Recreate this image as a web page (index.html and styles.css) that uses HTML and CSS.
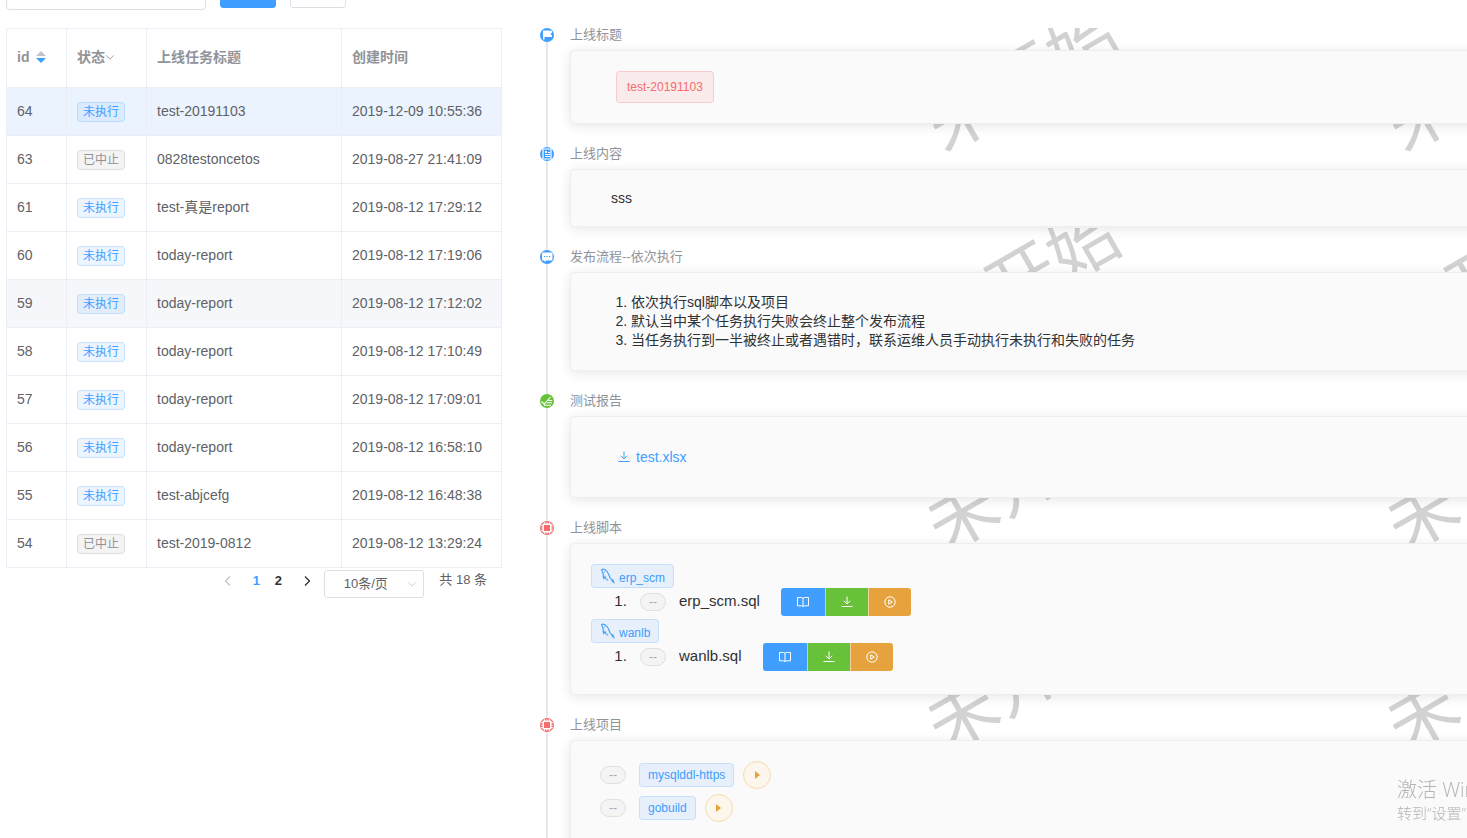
FILE: index.html
```
<!DOCTYPE html>
<html lang="zh-CN">
<head>
<meta charset="utf-8">
<title>上线任务</title>
<link rel="stylesheet" href="styles.css">
</head>
<body>
<svg class="defs" aria-hidden="true">
  <symbol id="i-download" viewBox="0 0 12 12"><path d="M6 .5v7.2M2.8 4.8L6 8l3.2-3.2M.5 10.500h11" fill="none" stroke="currentColor"/></symbol>
  <symbol id="i-read" viewBox="0 0 12 12"><path d="M6 2v8.500M.5 1.500H4.500L6 2.200 7.500 1.500h4v8.300h-4L6 10.500 4.500 9.800h-4z" fill="none" stroke="currentColor"/></symbol>
  <symbol id="i-play" viewBox="0 0 12 12"><circle cx="6" cy="6" r="5.200" fill="none" stroke="currentColor"/><path d="M4.700 3.800v4.400L8.300 6z" fill="none" stroke="currentColor"/></symbol>
  <symbol id="i-mysql" viewBox="0 0 16 16"><path d="M1.500 1.500C3.500.8 5.500 1.600 7 3.500c1.700 2.200 2.200 4.500 3 6.200.8 1.500 2.200 2.300 3.800 2.800l-1.800.3 2.500 2.200M1.500 1.500c.2 1.500 1.300 2.300 1.600 3.800.3 1.800-.2 3.500.7 5.200l1.100-1.800c.6 2 1.700 3.200 3.300 3.800" fill="none" stroke="currentColor" stroke-width="1.200"/><circle cx="4.800" cy="3.800" r=".6" fill="currentColor"/></symbol>
  <symbol id="i-left" viewBox="0 0 12 12"><path d="M8 1.500L3.500 6 8 10.500" fill="none" stroke="currentColor" stroke-width="1.300"/></symbol>
  <symbol id="i-right" viewBox="0 0 12 12"><path d="M4 1.500L8.500 6 4 10.500" fill="none" stroke="currentColor" stroke-width="1.300"/></symbol>
  <symbol id="i-down" viewBox="0 0 12 12"><path d="M1.500 4L6 8.500 10.500 4" fill="none" stroke="currentColor"/></symbol>
  <symbol id="i-chip" viewBox="0 0 14 14"><circle cx="7" cy="7" r="7" fill="#f56c6c"/><path d="M4.500 1.200v11.600M7 1.200v11.600M9.500 1.200v11.600M1.200 4.500h11.600M1.200 7h11.600M1.200 9.500h11.600" stroke="#fff" stroke-width=".9"/><rect x="2.500" y="2.500" width="9" height="9" rx="1" fill="#fff"/><rect x="4" y="4" width="6" height="6" fill="#f56c6c"/></symbol>
</svg>
<main class="page">
  <section class="tasks">
    <form class="search">
      <input class="search-input" type="text" aria-label="搜索">
      <button class="search-btn search-btn-primary" type="button" aria-label="搜索"></button>
      <button class="search-btn" type="button" aria-label="重置"></button>
    </form>
    <table class="table">
      <colgroup><col class="col-id"><col class="col-status"><col class="col-title"><col class="col-time"></colgroup>
      <thead>
        <tr>
          <th><span class="th-sort">id <svg class="sort" viewBox="0 0 10 12"><path d="M0 5L5 0l5 5z" fill="#c0c4cc"/><path d="M0 7l5 5 5-5z" fill="#409eff"/></svg></span></th>
          <th><span class="th-filter">状态<svg class="icon-filter"><use href="#i-down"/></svg></span></th>
          <th>上线任务标题</th><th>创建时间</th>
        </tr>
      </thead>
      <tbody>
        <tr class="current"><td>64</td><td><span class="tag tag-mini">未执行</span></td><td>test-20191103</td><td>2019-12-09 10:55:36</td></tr>
        <tr><td>63</td><td><span class="tag tag-mini tag-info">已中止</span></td><td>0828testoncetos</td><td>2019-08-27 21:41:09</td></tr>
        <tr><td>61</td><td><span class="tag tag-mini">未执行</span></td><td>test-真是report</td><td>2019-08-12 17:29:12</td></tr>
        <tr><td>60</td><td><span class="tag tag-mini">未执行</span></td><td>today-report</td><td>2019-08-12 17:19:06</td></tr>
        <tr class="hover"><td>59</td><td><span class="tag tag-mini">未执行</span></td><td>today-report</td><td>2019-08-12 17:12:02</td></tr>
        <tr><td>58</td><td><span class="tag tag-mini">未执行</span></td><td>today-report</td><td>2019-08-12 17:10:49</td></tr>
        <tr><td>57</td><td><span class="tag tag-mini">未执行</span></td><td>today-report</td><td>2019-08-12 17:09:01</td></tr>
        <tr><td>56</td><td><span class="tag tag-mini">未执行</span></td><td>today-report</td><td>2019-08-12 16:58:10</td></tr>
        <tr><td>55</td><td><span class="tag tag-mini">未执行</span></td><td>test-abjcefg</td><td>2019-08-12 16:48:38</td></tr>
        <tr><td>54</td><td><span class="tag tag-mini tag-info">已中止</span></td><td>test-2019-0812</td><td>2019-08-12 13:29:24</td></tr>
      </tbody>
    </table>
    <nav class="pagination" aria-label="分页">
      <button class="pager-arrow" type="button" disabled aria-label="上一页"><svg class="icon"><use href="#i-left"/></svg></button>
      <button class="pager active" type="button">1</button>
      <button class="pager" type="button">2</button>
      <button class="pager-arrow pager-next" type="button" aria-label="下一页"><svg class="icon"><use href="#i-right"/></svg></button>
      <div class="page-size">
        <select class="page-size-select" aria-label="每页条数"><option>10条/页</option></select>
        <svg class="icon-select"><use href="#i-down"/></svg>
      </div>
      <span class="total">共 18 条</span>
    </nav>
  </section>

  <section class="detail">
    <div class="watermark" aria-hidden="true">
      <div class="mark"><span>未开始</span></div><div class="mark"><span>未开始</span></div>
      <div class="mark"><span>未开始</span></div><div class="mark"><span>未开始</span></div>
      <div class="mark"><span>未开始</span></div><div class="mark"><span>未开始</span></div>
      <div class="mark"><span>未开始</span></div><div class="mark"><span>未开始</span></div>
    </div>
    <ul class="timeline">
      <li class="item">
        <svg class="node" viewBox="0 0 14 14"><circle cx="7" cy="7" r="7" fill="#409eff"/><path d="M3 2.500h6.500l1 .5 1.500-.5v2l-1.500 1.500L12 7.500V9H4.500v2.500H3z" fill="#fff"/></svg>
        <div class="title">上线标题</div>
        <div class="card"><div class="tag-box"><span class="tag tag-large tag-danger">test-20191103</span></div></div>
      </li>
      <li class="item">
        <svg class="node" viewBox="0 0 14 14"><circle cx="7" cy="7" r="7" fill="#409eff"/><path d="M3 2h8v10H3z" fill="none" stroke="#fff" stroke-width="1.200"/><path d="M5 4h2v2H5z" fill="#fff"/><path d="M8 5.500h2M5 7.500h5M5 9.500h5" fill="none" stroke="#fff"/></svg>
        <div class="title">上线内容</div>
        <div class="card"><p class="content">sss</p></div>
      </li>
      <li class="item">
        <svg class="node" viewBox="0 0 14 14"><circle cx="7" cy="7" r="7" fill="#409eff"/><path d="M3 2.500h8.500q1 0 1 1v6q0 1-1 1H6.500L4.500 12v-1.500H3q-1 0-1-1v-6q0-1 1-1z" fill="#fff"/><path d="M4 6h1.200v1H4zM6.500 6h1.200v1H6.500zM9 6h1.200v1H9z" fill="#409eff"/></svg>
        <div class="title">发布流程--依次执行</div>
        <div class="card">
          <ol class="flow"><li>依次执行sql脚本以及项目</li><li>默认当中某个任务执行失败会终止整个发布流程</li><li>当任务执行到一半被终止或者遇错时，联系运维人员手动执行未执行和失败的任务</li></ol>
        </div>
      </li>
      <li class="item">
        <svg class="node" viewBox="0 0 14 14"><circle cx="7" cy="7" r="7" fill="#67c23a"/><path d="M1.500 7.500l2.700 2.700L10.500 3M8.500 6.500h3.700M7 8.800h5M4 11.200h7" fill="none" stroke="#fff" stroke-width="1.100"/></svg>
        <div class="title">测试报告</div>
        <div class="card"><a class="file" href="#"><svg class="icon"><use href="#i-download"/></svg>test.xlsx</a></div>
      </li>
      <li class="item">
        <svg class="node"><use href="#i-chip"/></svg>
        <div class="title">上线脚本</div>
        <div class="card">
          <div class="script">
            <span class="tag tag-small tag-db"><svg class="icon-db"><use href="#i-mysql"/></svg>erp_scm</span>
            <ol class="script-list"><li><div class="script-row"><span class="state">--</span><span class="script-name">erp_scm.sql</span>
              <div class="group"><button class="btn btn-primary" type="button" aria-label="查看"><svg class="icon"><use href="#i-read"/></svg></button><button class="btn btn-success" type="button" aria-label="下载"><svg class="icon"><use href="#i-download"/></svg></button><button class="btn btn-warning" type="button" aria-label="执行"><svg class="icon"><use href="#i-play"/></svg></button></div></div></li></ol>
          </div>
          <div class="script">
            <span class="tag tag-small tag-db"><svg class="icon-db"><use href="#i-mysql"/></svg>wanlb</span>
            <ol class="script-list"><li><div class="script-row"><span class="state">--</span><span class="script-name">wanlb.sql</span>
              <div class="group"><button class="btn btn-primary" type="button" aria-label="查看"><svg class="icon"><use href="#i-read"/></svg></button><button class="btn btn-success" type="button" aria-label="下载"><svg class="icon"><use href="#i-download"/></svg></button><button class="btn btn-warning" type="button" aria-label="执行"><svg class="icon"><use href="#i-play"/></svg></button></div></div></li></ol>
          </div>
        </div>
      </li>
      <li class="item">
        <svg class="node"><use href="#i-chip"/></svg>
        <div class="title">上线项目</div>
        <div class="card card-projects">
          <div class="project"><span class="state">--</span><span class="tag tag-small">mysqlddl-https</span><button class="run" type="button" aria-label="执行 mysqlddl-https"><svg class="icon-run" viewBox="0 0 5 8"><path d="M0 0l5 4-5 4z" fill="currentColor"/></svg></button></div>
          <div class="project"><span class="state">--</span><span class="tag tag-small">gobuild</span><button class="run" type="button" aria-label="执行 gobuild"><svg class="icon-run" viewBox="0 0 5 8"><path d="M0 0l5 4-5 4z" fill="currentColor"/></svg></button></div>
        </div>
      </li>
    </ul>
  </section>
</main>
<aside class="activate"><p class="activate-title">激活 Windows</p><p class="activate-text">转到“设置”以激活 Windows。</p></aside>
</body>
</html>
```
FILE: styles.css
```
* { box-sizing: border-box; }
html { height: 100%; overflow: hidden; }
body {
  height: 100%;
  margin: 0;
  overflow: hidden;
  background: #fff;
  color: #303133;
  font: 14px/20px "Liberation Sans", "Noto Sans CJK SC", sans-serif;
}
button, input, select { font: inherit; margin: 0; }
p, ul, ol { margin: 0; padding: 0; }
.defs { display: none; }
svg { display: block; flex: none; }
.icon { width: 12px; height: 12px; }

.page { display: flex; align-items: flex-start; padding-left: 6px; }

/* Task list */
.tasks { flex: none; width: 496px; }
.search { display: flex; gap: 14px; height: 28px; margin-top: -18px; margin-bottom: 18px; }
.search-input { width: 200px; border: 1px solid #dcdfe6; border-radius: 4px; }
.search-btn { width: 56px; height: 26px; border: 1px solid #dcdfe6; border-radius: 3px; background: #fff; }
.search-btn-primary { background: #409eff; border-color: #409eff; }

.table {
  width: 100%;
  table-layout: fixed;
  border-spacing: 0;
  border-top: 1px solid #ebeef5;
  border-left: 1px solid #ebeef5;
  color: #606266;
}
.col-id { width: 60px; }
.col-status { width: 80px; }
.col-time { width: 160px; }
.table th, .table td {
  height: 48px;
  padding: 0 10px 2px;
  border-right: 1px solid #ebeef5;
  border-bottom: 1px solid #ebeef5;
  text-align: left;
  white-space: nowrap;
}
.table td:nth-child(2) { padding-bottom: 0; }
.table th { height: 59px; color: #909399; }
.current { background: #ebf3ff; }
.hover { background: #f5f7fa; }
.th-sort, .th-filter { display: flex; align-items: center; }
.th-sort { gap: 7px; }
.sort { width: 10px; height: 12px; }
.icon-filter { width: 10px; height: 10px; }

.tag {
  display: inline-flex;
  align-items: center;
  border: 1px solid rgba(64, 158, 255, .2);
  border-radius: 4px;
  background: rgba(64, 158, 255, .1);
  color: #409eff;
  font-size: 12px;
  white-space: nowrap;
}
.tag-mini { height: 20px; padding: 0 5px; vertical-align: middle; line-height: 18px; }
.tag-small { height: 24px; padding: 0 8px; }
.tag-large { height: 32px; padding: 0 10px; }
.tag-info { background: #f4f4f5; border-color: #dedfe1; color: #909399; }
.tag-danger { background: rgba(245, 108, 108, .1); border-color: rgba(245, 108, 108, .25); color: #f56c6c; }

.pagination { display: flex; align-items: flex-start; padding: 2px 15px 0 0; justify-content: flex-end; font-size: 13px; color: #606266; }
.pager, .pager-arrow { display: flex; align-items: center; justify-content: center; width: 22px; height: 22px; padding: 0; border: 0; background: none; color: #303133; font-weight: bold; }
.pager-arrow { width: 35px; }
.pager-arrow:disabled { color: #c0c4cc; }
.pager.active { color: #409eff; }
.page-size { position: relative; width: 100px; margin-right: 15px; }
.page-size-select { width: 100%; height: 28px; padding: 0 17px 0 0; border: 1px solid #dcdfe6; border-radius: 3px; background: #fff; color: #606266; text-align: center; text-align-last: center; appearance: none; }
.icon-select { position: absolute; right: 7px; top: 9px; width: 10px; height: 10px; color: #c0c4cc; pointer-events: none; }

/* Detail timeline */
.detail { position: relative; flex: 1; min-width: 0; margin: 28px -20px 0 38px; }
.watermark {
  position: absolute;
  top: 0;
  left: 360px;
  display: grid;
  grid-template-columns: 460px 460px;
  grid-auto-rows: 200px;
  color: #d2d2d2;
  font-size: 70px;
  line-height: 80px;
}
.mark { overflow: hidden; padding: 12px 0 0 18px; }
.mark span { display: block; width: 210px; white-space: nowrap; transform: rotate(-30deg); }

.timeline { position: relative; list-style: none; }
.item { position: relative; padding: 0 0 23px 30px; }
.item::before { content: ""; position: absolute; left: 6px; top: 0; bottom: 0; width: 2px; background: #e4e7ed; }
.node { position: absolute; left: 0; top: 0; width: 14px; height: 14px; }
.title { margin-bottom: 8px; color: #909399; font-size: 13px; line-height: 14px; }
.card {
  padding: 20px;
  border: 1px solid #ebeef5;
  border-radius: 4px;
  background: #fafafa;
  box-shadow: 0 2px 12px rgba(0, 0, 0, .1);
}
.card-projects { display: flex; flex-direction: column; gap: 5px; min-height: 140px; }
.tag-box { display: flex; padding-left: 25px; }
.content { padding-left: 20px; line-height: 16px; }
.flow { padding-left: 40px; line-height: 19px; }
.file { display: flex; align-items: center; gap: 6px; height: 40px; padding-left: 27px; color: #409eff; text-decoration: none; }

.script { height: 55px; }
.tag-db { gap: 3px; align-items: flex-start; padding-top: 3px; }
.tag-db.tag { display: flex; width: fit-content; }
.icon-db { width: 16px; height: 16px; }
.script-list { padding-left: 40px; font-size: 15px; line-height: 26px; }
.script-row { display: flex; align-items: center; padding-left: 9px; }
.script-name { margin: 0 21px 2px 13px; }
.state { display: flex; align-items: center; justify-content: center; width: 26px; height: 18px; border: 1px solid #e0e0e2; border-radius: 9px; background: #f4f4f5; color: #a6a9ad; font-size: 12px; line-height: 16px; }
.group { display: flex; }
.btn { display: flex; align-items: center; justify-content: center; width: 43px; height: 28px; padding: 0; border: 0; color: #fff; }
.btn + .btn { border-left: 1px solid rgba(255, 255, 255, .5); }
.btn-primary { width: 44px; background: #409eff; border-radius: 3px 0 0 3px; }
.btn-success { background: #67c23a; }
.btn-warning { background: #e6a23c; border-radius: 0 3px 3px 0; }

.project { display: flex; align-items: center; padding-left: 9px; }
.project .tag { margin: 0 9px 0 13px; }
.run { display: flex; align-items: center; justify-content: center; width: 28px; height: 28px; padding: 0; border: 1px solid #f5dab1; border-radius: 50%; background: #fdf6ec; color: #e6a23c; }
.icon-run { width: 5px; height: 8px; }

.activate {
  position: fixed;
  right: 0;
  bottom: 15px;
  width: 70px;
  overflow: hidden;
  color: #b4b4b4;
  font-family: "Open Sans", "Noto Sans CJK SC", sans-serif;
  font-weight: 300;
  white-space: nowrap;
}
.activate-title { font-size: 20px; line-height: 26px; }
.activate-text { font-size: 15px; line-height: 20px; }
```
